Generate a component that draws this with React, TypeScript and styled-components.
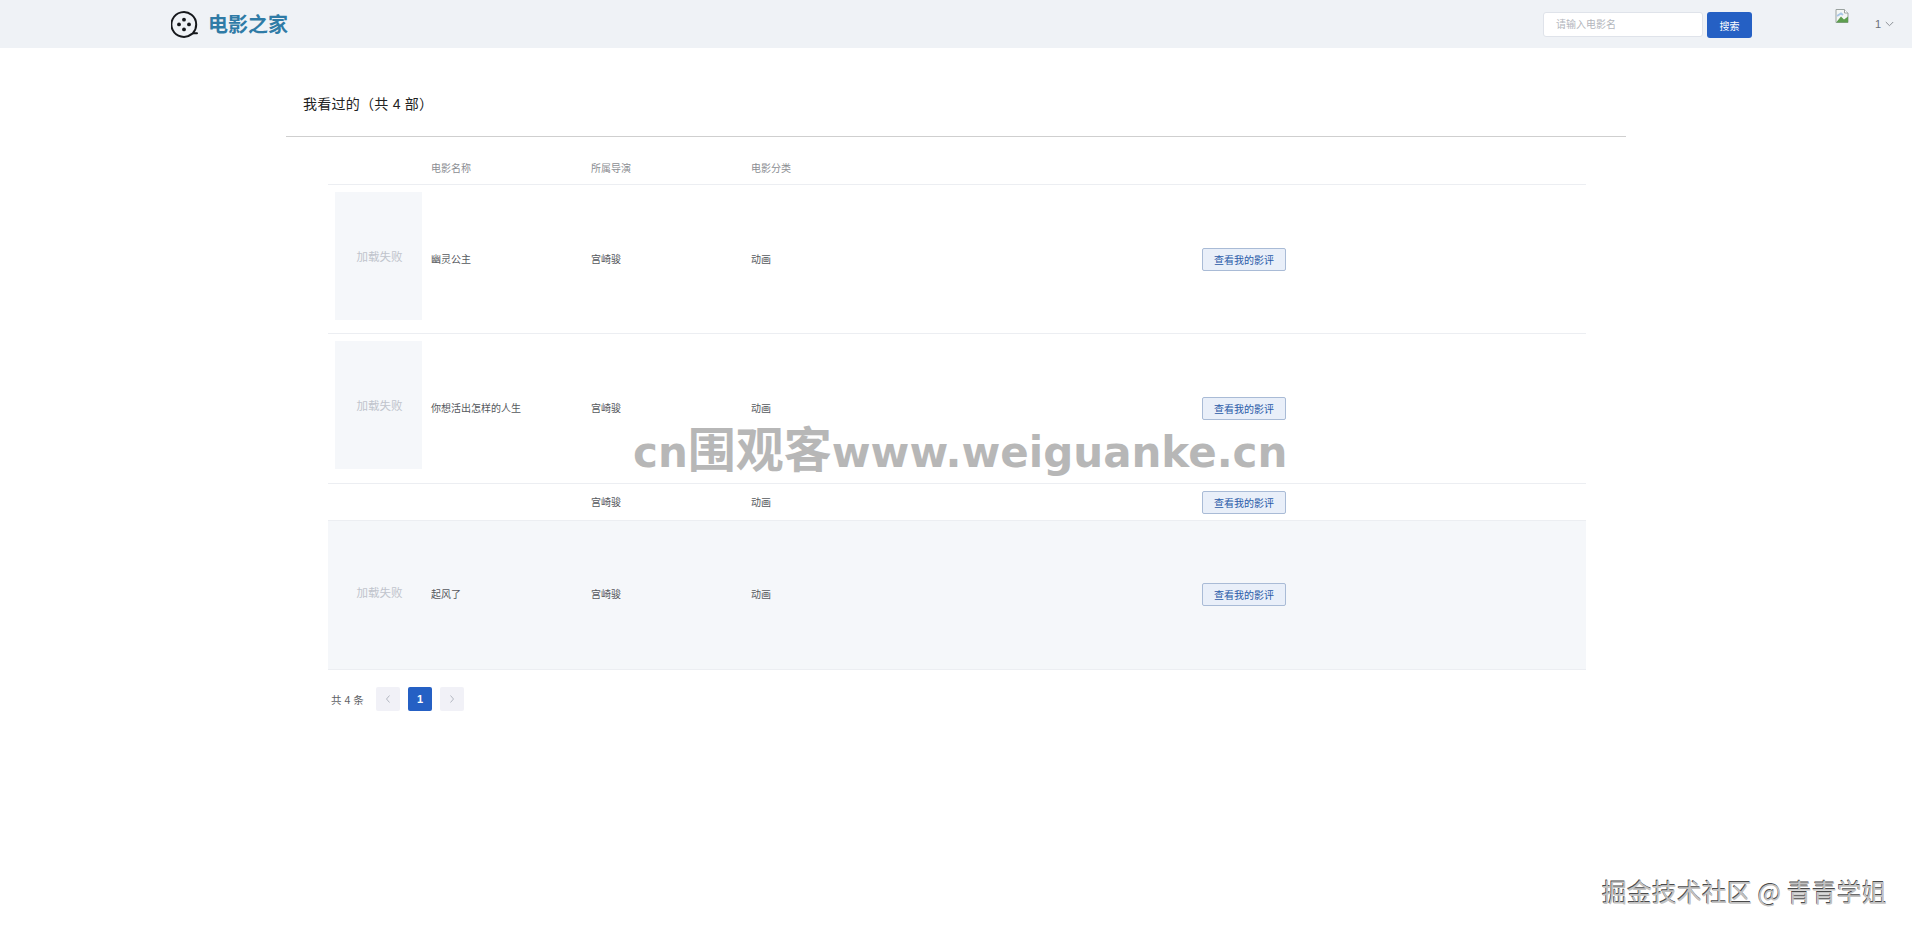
import React from "react";
import styled, { createGlobalStyle } from "styled-components";

const Global = createGlobalStyle`
  html, body { margin: 0; padding: 0; background: #fff; }
  body { font-family: "Liberation Sans", "Noto Sans CJK SC", sans-serif; height: 930px; overflow: hidden; }
  * { box-sizing: border-box; }
`;

const Page = styled.div`
  position: relative;
  width: 1912px;
  height: 930px;
  background: #fff;
`;

const Header = styled.header`
  height: 48px;
  background: #eff2f6;
  display: flex;
  align-items: flex-start;
  padding-left: 171px;
`;

const Brand = styled.div`
  display: flex;
  align-items: center;
  gap: 10px;
  margin-top: 11px;
  height: 27px;
`;

const BrandName = styled.span`
  font-size: 20px;
  font-weight: 700;
  color: #2f7ba6;
  line-height: 27px;
  padding-top: 2px;
`;

const SearchGroup = styled.div`
  display: flex;
  gap: 4px;
  margin-left: auto;
  margin-top: 12px;
`;

const SearchInput = styled.div`
  width: 160px;
  height: 25px;
  background: #fff;
  border: 1px solid #dfe3ea;
  border-radius: 3px;
  padding-left: 12px;
  font-size: 10px;
  line-height: 24px;
  color: #b3b6bc;
`;

const SearchButton = styled.button`
  width: 45px;
  height: 26px;
  border: 0;
  border-radius: 3px;
  background: #2560c4;
  color: #fff;
  font: inherit;
  font-size: 10px;
  padding: 0;
`;

const UserArea = styled.div`
  display: flex;
  align-items: flex-start;
  margin-left: 83px;
  margin-right: 16px;
  width: 61px;
`;

const AvatarIcon = styled.svg`
  margin-top: 8px;
  width: 14px;
  height: 16px;
`;

const UserName = styled.span`
  margin-top: 18px;
  margin-left: 26px;
  font-size: 11px;
  line-height: 13px;
  color: #6b7078;
`;

const Caret = styled.svg`
  margin-top: 21px;
  margin-left: 4px;
  width: 9px;
  height: 6px;
`;

const Main = styled.main`
  width: 1340px;
  margin: 0 auto;
`;

const Heading = styled.h2`
  margin: 0;
  height: 89px;
  padding: 47px 0 0 17px;
  font-size: 14px;
  letter-spacing: 0.25px;
  line-height: 18px;
  font-weight: 400;
  color: #222;
  border-bottom: 1px solid #cfcfcf;
`;

const TableWrap = styled.div`
  margin: 0 40px 0 42px;
`;

const HeadRow = styled.div`
  display: grid;
  grid-template-columns: 103px 160px 160px 451px 1fr;
  height: 48px;
  align-items: center;
  padding-top: 13px;
  border-bottom: 1px solid #eceef2;
  font-size: 10px;
  color: #8b8e93;
`;

const Row = styled.div<{ $h: number; $hover?: boolean }>`
  display: grid;
  grid-template-columns: 103px 160px 160px 451px 1fr;
  height: ${(p) => p.$h}px;
  padding-bottom: ${(p) => (p.$hover ? 2 : 0)}px;
  align-items: center;
  border-bottom: 1px solid #eceef2;
  background: ${(p) => (p.$hover ? "#f5f7fa" : "#fff")};
  font-size: 10px;
  color: #55585d;
`;

const Cell = styled.span`
  padding-bottom: 2px;
`;

const Poster = styled.div`
  align-self: start;
  margin: 7px 0 0 7px;
  width: 87px;
  height: 128px;
  padding-left: 2px;
  background: #f5f7fa;
  display: flex;
  align-items: center;
  justify-content: center;
  font-size: 11.5px;
  color: #c0c4cc;
`;

const ReviewButton = styled.button`
  width: 84px;
  height: 23px;
  border: 1px solid #a9bbd6;
  border-radius: 2px;
  background: #e9eff9;
  color: #2a5aa8;
  font: inherit;
  font-size: 10px;
  padding: 0;
`;

const Pager = styled.div`
  display: flex;
  align-items: center;
  margin-top: 17px;
  padding-left: 3px;
  height: 24px;
  font-size: 10.5px;
  color: #606266;
`;

const Total = styled.span`
  width: 45px;
`;

const PageBtn = styled.div<{ $active?: boolean }>`
  width: 24px;
  height: 24px;
  margin-right: 8px;
  border-radius: 2px;
  background: ${(p) => (p.$active ? "#2560c4" : "#f1f1f7")};
  color: ${(p) => (p.$active ? "#fff" : "#b4b8c2")};
  font-weight: 700;
  font-size: 11px;
  display: flex;
  align-items: center;
  justify-content: center;
`;

const SiteMark = styled.div`
  position: absolute;
  left: 633px;
  top: 416px;
  font-family: "DejaVu Sans", sans-serif;
  font-size: 42px;
  font-weight: 700;
  line-height: 60px;
  white-space: nowrap;
  color: #b7b7b7;
`;

const SiteMarkCjk = styled.span`
  font-family: "Noto Sans CJK SC", sans-serif;
  font-size: 48px;
  font-weight: 700;
`;

const AuthorMark = styled.div`
  position: absolute;
  left: 1602px;
  top: 875px;
  font-family: "Noto Sans CJK SC", sans-serif;
  font-size: 25px;
  line-height: 32px;
  white-space: nowrap;
  color: #c2c2c2;
  text-shadow: -0.7px -0.7px 0 #4a4a4a;
`;

const rows = [
  { title: "幽灵公主", h: 149, poster: true },
  { title: "你想活出怎样的人生", h: 150, poster: true },
  { title: "", h: 37, poster: false },
  { title: "起风了", h: 149, poster: true, hover: true },
];

const Chevron = ({ left }: { left?: boolean }) => (
  <svg width="8" height="10" viewBox="0 0 8 10" fill="none" stroke="currentColor" strokeWidth="1">
    <path d={left ? "M5.5 1.5 2.5 5l3 3.5" : "M2.5 1.5 5.5 5l-3 3.5"} />
  </svg>
);

export default function App() {
  return (
    <Page>
      <Global />
      <Header>
        <Brand>
          <svg width="27" height="27" viewBox="0 0 27 27" fill="none">
            <path
              d="M26.5 24.8h-3.2c-.9 0-1.5.3-2.2.8a12.4 12.4 0 1 1 4.6-9.6c0 3.2-1 6-3 8.2"
              stroke="#16181c"
              strokeWidth="2"
              strokeLinecap="round"
              transform="translate(-.5 -2.5)"
            />
            <circle cx="13" cy="8.7" r="1.9" fill="#16181c" />
            <circle cx="8" cy="13.4" r="1.9" fill="#16181c" />
            <circle cx="18" cy="13.4" r="1.9" fill="#16181c" />
            <circle cx="13" cy="18.4" r="1.9" fill="#16181c" />
          </svg>
          <BrandName>电影之家</BrandName>
        </Brand>
        <SearchGroup>
          <SearchInput>请输入电影名</SearchInput>
          <SearchButton>搜索</SearchButton>
        </SearchGroup>
        <UserArea>
          <AvatarIcon viewBox="0 0 14 16">
            <path d="M1 1.5h8.5L13 5v9.5H1z" fill="#f4f6f4" stroke="#9aa3a0" strokeWidth="1" />
            <path d="M9.5 1.5V5H13" fill="#fff" stroke="#9aa3a0" strokeWidth="1" />
            <path d="M1.5 14 6 8.5l3 3 4-3v6H1.5z" fill="#5d9e4f" />
            <path d="M2 8l4-2.5 2 1.5" fill="none" stroke="#a9c6e6" strokeWidth="2" />
          </AvatarIcon>
          <UserName>1</UserName>
          <Caret viewBox="0 0 9 6" fill="none" stroke="#8c9096" strokeWidth="1">
            <path d="M.8 1 4.5 4.7 8.2 1" />
          </Caret>
        </UserArea>
      </Header>
      <Main>
        <Heading>我看过的（共 4 部）</Heading>
        <TableWrap>
          <HeadRow>
            <span />
            <span>电影名称</span>
            <span>所属导演</span>
            <span>电影分类</span>
            <span />
          </HeadRow>
          {rows.map((r, i) => (
            <Row key={i} $h={r.h} $hover={r.hover}>
              {r.poster ? <Poster>加载失败</Poster> : <span />}
              <Cell>{r.title}</Cell>
              <Cell>宫崎骏</Cell>
              <Cell>动画</Cell>
              <span>
                <ReviewButton>查看我的影评</ReviewButton>
              </span>
            </Row>
          ))}
          <Pager>
            <Total>共 4 条</Total>
            <PageBtn>
              <Chevron left />
            </PageBtn>
            <PageBtn $active>1</PageBtn>
            <PageBtn>
              <Chevron />
            </PageBtn>
          </Pager>
        </TableWrap>
      </Main>
      <SiteMark>
        cn<SiteMarkCjk>围观客</SiteMarkCjk>www.weiguanke.cn
      </SiteMark>
      <AuthorMark>掘金技术社区 @ 青青学姐</AuthorMark>
    </Page>
  );
}
